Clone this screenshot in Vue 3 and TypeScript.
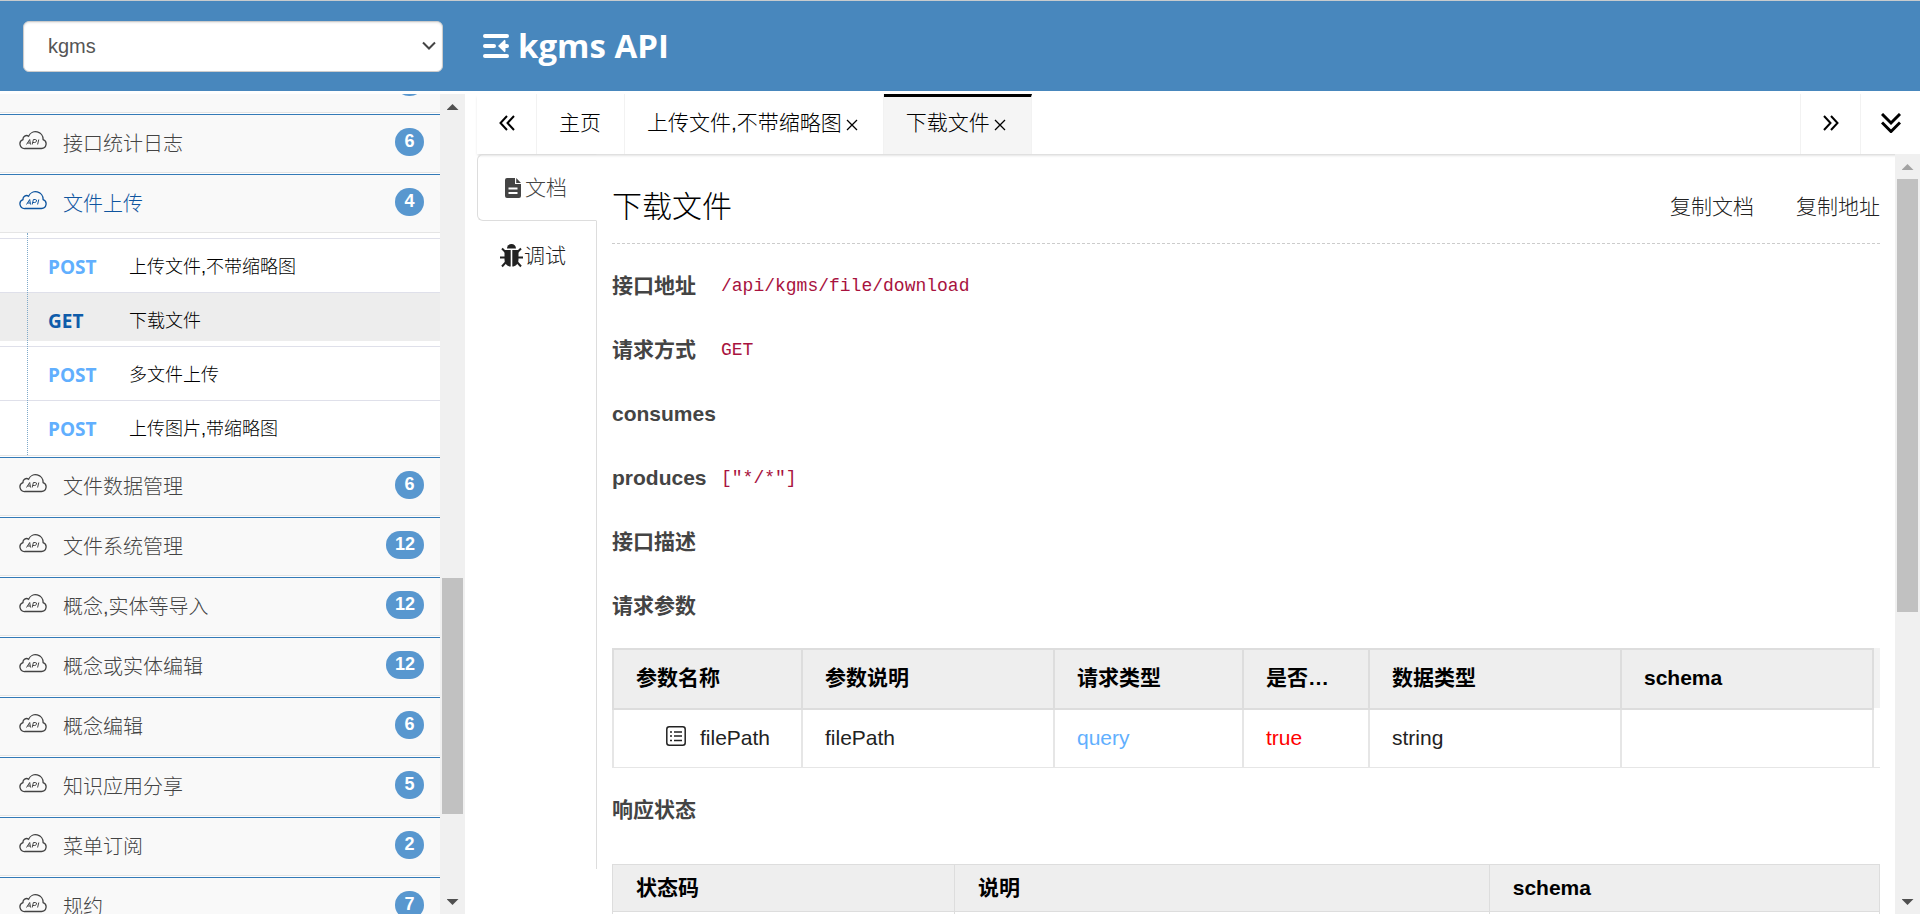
<script setup lang="ts">
import { ref } from 'vue'

interface Endpoint {
  method: string
  name: string
}
interface Group {
  name: string
  count: number
  open?: boolean
  clipped?: boolean
  items?: Endpoint[]
}

const service = ref('kgms')

const groups: Group[] = [
  { name: '', count: 8, clipped: true },
  { name: '接口统计日志', count: 6 },
  {
    name: '文件上传',
    count: 4,
    open: true,
    items: [
      { method: 'POST', name: '上传文件,不带缩略图' },
      { method: 'GET', name: '下载文件' },
      { method: 'POST', name: '多文件上传' },
      { method: 'POST', name: '上传图片,带缩略图' },
    ],
  },
  { name: '文件数据管理', count: 6 },
  { name: '文件系统管理', count: 12 },
  { name: '概念,实体等导入', count: 12 },
  { name: '概念或实体编辑', count: 12 },
  { name: '概念编辑', count: 6 },
  { name: '知识应用分享', count: 5 },
  { name: '菜单订阅', count: 2 },
  { name: '规约', count: 7 },
]

const activeEndpoint = ref('下载文件')

const facts = [
  { label: '接口地址', value: '/api/kgms/file/download' },
  { label: '请求方式', value: 'GET' },
  { label: 'consumes', value: '' },
  { label: 'produces', value: '["*/*"]' },
  { label: '接口描述', value: '' },
  { label: '请求参数', value: '' },
]
</script>

<template>
  <div class="page">
    <header class="top">
      <div class="picker">
        <select v-model="service" aria-label="服务">
          <option value="kgms">kgms</option>
        </select>
        <svg class="caret" viewBox="0 0 14 10" aria-hidden="true"><path d="M1 1.5l6 6 6-6" /></svg>
      </div>
      <button class="fold" type="button" aria-label="收起菜单">
        <svg viewBox="0 0 26 24" aria-hidden="true">
          <path d="M2 2h22M2 12h9M2 22h22M20 12h4" />
          <path class="solid" d="M15 12l6.500-6.200q1 .2 1 1.200v10q0 1-1 1.200z" />
        </svg>
      </button>
      <h1>kgms API</h1>
    </header>

    <div class="body">
      <aside class="side">
        <nav class="menu">
          <ul>
            <li v-for="g in groups" :key="g.name" class="group" :class="{ clipped: g.clipped, open: g.open }">
              <button type="button" class="group-head">
                <svg class="cloud" viewBox="0 0 28 19" aria-hidden="true">
                  <path d="M6 17.500h16.500a4.600 4.600 0 0 0 1.600-8.900A7.600 7.600 0 0 0 9.600 5.200 3.600 3.600 0 0 0 4 8.600a4.600 4.600 0 0 0 2 8.900z" />
                  <path class="fine" d="M7.500 13.500l3.200-5 .8 5M8.600 12h2.600M13.200 13.500l1.200-5h2q1.600.2 1 1.700t-1.800 1.300h-1.800M18.600 13.500l1.200-5" />
                </svg>
                <span class="group-name">{{ g.name }}</span>
                <span class="badge">{{ g.count }}</span>
              </button>
              <ul v-if="g.items" class="sub">
                <li v-for="e in g.items" :key="e.name">
                  <a href="#" :class="{ active: e.name === activeEndpoint }" @click.prevent="activeEndpoint = e.name">
                    <span class="method" :class="e.method.toLowerCase()">{{ e.method }}</span>
                    <span>{{ e.name }}</span>
                  </a>
                </li>
              </ul>
            </li>
          </ul>
        </nav>
        <div class="bar" aria-hidden="true">
          <i class="up"></i>
          <span class="track side-track"><b></b></span>
          <i class="down"></i>
        </div>
      </aside>

      <main class="main">
        <div class="tabs">
          <button type="button" class="edge left" aria-label="向左">
            <svg viewBox="0 0 16 16" aria-hidden="true"><path d="M8 1L1.500 8 8 15M15 1L8.500 8l6.500 7" /></svg>
          </button>
          <button type="button" class="tab">主页</button>
          <button type="button" class="tab">上传文件,不带缩略图<svg class="x" viewBox="0 0 12 12" aria-hidden="true"><path d="M1 1l10 10M11 1L1 11" /></svg></button>
          <button type="button" class="tab current">下载文件<svg class="x" viewBox="0 0 12 12" aria-hidden="true"><path d="M1 1l10 10M11 1L1 11" /></svg></button>
          <span class="fill"></span>
          <button type="button" class="edge right" aria-label="向右">
            <svg viewBox="0 0 16 16" aria-hidden="true"><path d="M1 1l6.500 7L1 15M8 1l6.500 7L8 15" /></svg>
          </button>
          <button type="button" class="edge right more" aria-label="更多">
            <svg viewBox="0 0 20 20" aria-hidden="true"><path d="M1 1l9 9 9-9M1 9.500l9 9 9-9" /></svg>
          </button>
        </div>

        <div class="pane">
          <div class="modes">
            <button type="button" class="mode on">
              <svg class="file" viewBox="0 0 16 20" aria-hidden="true">
                <path d="M2 0h8v6h6v12a2 2 0 0 1-2 2H2a2 2 0 0 1-2-2V2a2 2 0 0 1 2-2zm1.500 9.500v2h9v-2zm0 4.500v2h9v-2zM11.200 0L16 4.900h-4.800z" />
              </svg>文档
            </button>
            <button type="button" class="mode">
              <svg class="bug" viewBox="0 0 23 24" aria-hidden="true">
                <path d="M7 4.500a4.500 4.500 0 0 1 9 0z" />
                <path d="M4.500 6h6.200v16.500H9.500q-5-1.500-5-7zM18.500 6h-6.200v16.500h1.200q5-1.500 5-7z" />
                <path class="leg" d="M6 8.500L2 4.500M0 13.500h6M6.500 17.500L2 22.500M17 8.500l4-4M23 13.500h-6M16.500 17.500l4.500 5" />
              </svg>调试
            </button>
            <span class="rest"></span>
          </div>

          <section class="doc">
            <div class="doc-head">
              <h2>下载文件</h2>
              <button type="button">复制文档</button>
              <button type="button">复制地址</button>
            </div>

            <div v-for="f in facts" :key="f.label" class="fact">
              <strong>{{ f.label }}</strong><code v-if="f.value">{{ f.value }}</code>
            </div>

            <div class="params">
              <table>
                <colgroup>
                  <col class="c3"><col class="c4"><col class="c3"><col class="c2"><col class="c4"><col class="c4">
                </colgroup>
                <thead>
                  <tr><th>参数名称</th><th>参数说明</th><th>请求类型</th><th>是否必须</th><th>数据类型</th><th>schema</th></tr>
                </thead>
                <tbody>
                  <tr>
                    <td>
                      <span class="leaf">
                        <svg viewBox="0 0 20 20" aria-hidden="true">
                          <rect x="0.800" y="0.800" width="18.400" height="18.400" rx="2.500" />
                          <path d="M4 6h2M8 6h8M4 10h2M8 10h8M4 14.500h2M8 14.500h8" />
                        </svg>filePath
                      </span>
                    </td>
                    <td>filePath</td>
                    <td class="query">query</td>
                    <td class="must">true</td>
                    <td>string</td>
                    <td></td>
                  </tr>
                </tbody>
              </table>
            </div>

            <div class="fact"><strong>响应状态</strong></div>

            <table class="status">
              <colgroup><col class="s1"><col class="s2"><col></colgroup>
              <thead>
                <tr><th>状态码</th><th>说明</th><th>schema</th></tr>
              </thead>
              <tbody>
                <tr><td></td><td></td><td></td></tr>
              </tbody>
            </table>
          </section>

          <div class="bar" aria-hidden="true">
            <i class="up faded"></i>
            <span class="track"><b></b></span>
            <i class="down"></i>
          </div>
        </div>
      </main>
    </div>
  </div>
</template>

<style>
html,
body {
  margin: 0;
  overflow: hidden;
}
</style>

<style scoped>
.page {
  display: flex;
  flex-direction: column;
  height: 100vh;
  box-sizing: border-box;
  border-top: 1px solid #c8cbcd;
  background: #fff;
  color: #222;
  font-family: "Liberation Sans", "Noto Sans CJK SC", sans-serif;
  font-size: 21px;
  font-weight: 300;
  line-height: 30px;
}
.page * {
  box-sizing: border-box;
}
button {
  font: inherit;
  color: inherit;
  background: none;
  border: 0;
  padding: 0;
  cursor: pointer;
}
ul {
  list-style: none;
  margin: 0;
  padding: 0;
}
svg {
  flex: none;
  fill: none;
  stroke: currentColor;
}

/* header */
.top {
  display: flex;
  align-items: center;
  flex: none;
  height: 90px;
  padding-left: 23px;
  background: #4887bd;
  color: #fff;
}
.picker {
  display: grid;
  align-items: center;
  width: 420px;
}
.picker > * {
  grid-area: 1 / 1;
}
select {
  appearance: none;
  width: 100%;
  height: 51px;
  padding: 0 24px;
  border: 1px solid #ccc;
  border-radius: 6px;
  background: #fff;
  box-shadow: inset 0 1px 2px rgba(0, 0, 0, 0.1);
  color: #555;
  font: 20px "Liberation Sans", "Noto Sans CJK SC", sans-serif;
}
.caret {
  justify-self: end;
  width: 14px;
  height: 10px;
  margin-right: 7px;
  stroke: #444;
  stroke-width: 2;
  pointer-events: none;
}
.fold {
  display: flex;
  margin-left: 40px;
}
.fold svg {
  width: 26px;
  height: 24px;
  stroke-linecap: round;
  stroke-width: 4;
}
.fold .solid {
  fill: currentColor;
  stroke: none;
}
h1 {
  margin: 0 0 0 9px;
  font: bold 33px/44px "Open Sans", "Noto Sans", sans-serif;
}

.body {
  display: flex;
  flex: 1;
  min-height: 0;
  padding-top: 3px;
}

/* side menu */
.side {
  display: flex;
  flex: none;
  width: 465px;
}
.menu {
  flex: 1;
  overflow: hidden;
}
.group {
  border-top: 1px solid #337ab7;
  padding-bottom: 1px;
}
.group.clipped {
  display: flex;
  flex-direction: column;
  justify-content: flex-end;
  height: 20px;
  border-top: 0;
  overflow: hidden;
}
.group-head {
  display: flex;
  align-items: center;
  flex: none;
  width: 100%;
  height: 58px;
  padding: 0 16px 3px 19px;
  border-bottom: 1px solid #e5e5e5;
  background: #f9f9f9;
  color: #444;
  font-size: 20px;
}
.group.open .group-head {
  color: #0f559f;
}
.cloud {
  width: 28px;
  height: 19px;
  margin-bottom: 3px;
  stroke-width: 1.3;
}
.cloud .fine {
  stroke-width: 1;
}
.group-name {
  margin: 4px 0 0 16px;
}
.badge {
  min-width: 29px;
  height: 28px;
  margin-left: auto;
  padding: 0 9px;
  border-radius: 14px;
  background: #5897cf;
  color: #fff;
  font-size: 18px;
  font-weight: bold;
  line-height: 26px;
  text-align: center;
}
.sub {
  position: relative;
  height: 223px;
  padding-top: 5px;
  border-bottom: 1px solid #e5e5e5;
}
.sub::before {
  content: "";
  position: absolute;
  top: 0;
  bottom: 0;
  left: 27px;
  border-left: 1px dotted #7fa9c9;
}
.sub li {
  height: 54px;
  border-top: 1px solid #dfe0ea;
}
.sub a {
  display: flex;
  align-items: center;
  height: 48px;
  padding: 8px 0 0 48px;
  color: #000;
  font-size: 18px;
  text-decoration: none;
}
.sub a.active {
  background: #ededed;
}
.method {
  width: 81px;
  font: bold 19px/26px "Open Sans", "Noto Sans", sans-serif;
}
.method.post {
  color: #61affe;
}
.method.get {
  color: #0f5caa;
}

/* scroll bars */
.bar {
  display: flex;
  flex-direction: column;
  align-items: center;
  flex: none;
  width: 25px;
  background: #f0f0f0;
}
.bar i {
  flex: none;
  width: 12px;
  height: 6px;
  margin: 10px 0 9px;
  background: #505050;
  clip-path: polygon(50% 0, 100% 100%, 0 100%);
}
.bar i.down {
  clip-path: polygon(0 0, 100% 0, 50% 100%);
}
.bar i.faded {
  background: #a3a3a3;
}
.track {
  flex: 1;
  width: 21px;
}
.track b {
  display: block;
  height: 61%;
  background: #c1c1c1;
}
.side-track {
  display: flex;
  flex-direction: column;
}
.side-track::before {
  content: "";
  flex: 459;
}
.side-track::after {
  content: "";
  flex: 75;
}
.side-track b {
  flex: 236;
  height: auto;
}

/* tabs */
.main {
  display: flex;
  flex: 1;
  flex-direction: column;
  min-width: 0;
  padding-left: 12px;
}
.tabs {
  display: flex;
  flex: none;
  height: 60px;
  box-shadow: 0 2px 3px -1px rgba(0, 0, 0, 0.2);
  color: #000;
}
.tab,
.edge {
  display: flex;
  align-items: center;
  justify-content: center;
  flex: none;
  border-right: 1px solid #f2f2f2;
}
.tab {
  padding: 0 23px 2px 22px;
}
.tab.current {
  padding-bottom: 5px;
  border-top: 3px solid #000;
  background: #f5f5f5;
}
.edge {
  width: 60px;
  padding-bottom: 2px;
}
.edge.right {
  border-right: 0;
  border-left: 1px solid #f2f2f2;
}
.edge svg {
  width: 16px;
  height: 16px;
  stroke-width: 2;
}
.edge.more svg {
  width: 20px;
  height: 20px;
  stroke-width: 3;
}
.x {
  width: 12px;
  height: 12px;
  margin: 3px 2px 0 4px;
  stroke-width: 1.3;
}
.fill {
  flex: 1;
}

.pane {
  display: flex;
  flex: 1;
  min-height: 0;
}
.modes {
  display: flex;
  flex: none;
  flex-direction: column;
  width: 120px;
  margin-bottom: 45px;
}
.mode {
  display: flex;
  align-items: center;
  gap: 1px;
  height: 70px;
  padding-left: 23px;
  border-right: 1px solid #ddd;
}
.mode.on {
  gap: 4px;
  height: 67px;
  padding-left: 27px;
  border: 1px solid #ddd;
  border-right-color: transparent;
  border-radius: 6px 0 0 6px;
  color: #444;
}
.mode svg {
  fill: currentColor;
  fill-rule: evenodd;
  stroke: none;
}
.file {
  width: 16px;
  height: 20px;
}
.bug {
  width: 23px;
  height: 24px;
}
.mode .leg {
  fill: none;
  stroke: currentColor;
  stroke-width: 2;
}
.rest {
  flex: 1;
  border-right: 1px solid #ddd;
}

/* document */
.doc {
  flex: 1;
  min-width: 0;
  padding: 0 15px;
  overflow: hidden;
}
.doc-head {
  display: flex;
  align-items: center;
  gap: 42px;
  height: 90px;
  padding-top: 16px;
  margin-bottom: 10px;
  border-bottom: 1px dashed #ccc;
}
h2 {
  flex: 1;
  margin: 0;
  color: #000;
  font-size: 30px;
  font-weight: 300;
  line-height: 40px;
}
.fact {
  display: flex;
  align-items: center;
  height: 64px;
}
.fact strong {
  min-width: 109px;
  color: #444;
  font-weight: bold;
}
code {
  color: #a8123e;
  font: 18px/28px "Liberation Mono", monospace;
}
table {
  width: 100%;
  border-collapse: collapse;
  table-layout: fixed;
}
th,
td {
  padding: 0 22px 2px;
  text-align: left;
}
th {
  background: #eee;
  color: #000;
  overflow: hidden;
  text-overflow: ellipsis;
  white-space: nowrap;
}
.params {
  margin: 10px 0;
  padding-right: 6px;
  background: linear-gradient(#f2f2f2 60px, #fff 60px);
  border-bottom: 1px solid #e6e6e6;
}
.params th {
  height: 60px;
  border: 2px solid #ddd;
}
.params td {
  height: 58px;
  border: 2px solid #e6e6e6;
  border-bottom: 0;
}
.c2 { width: 10%; }
.c3 { width: 15%; }
.c4 { width: 20%; }
.leaf {
  display: flex;
  align-items: center;
  gap: 14px;
  padding-left: 30px;
}
.leaf svg {
  width: 20px;
  height: 20px;
  margin-bottom: 4px;
  stroke-width: 1.5;
}
.query {
  color: #61affe;
}
.must {
  color: #f00;
}
.status {
  margin-top: 22px;
}
.status th,
.status td {
  height: 47px;
  border: 1px solid #ddd;
  padding: 0 23px;
}
.s1 { width: 27%; }
.s2 { width: 42.2%; }
</style>
